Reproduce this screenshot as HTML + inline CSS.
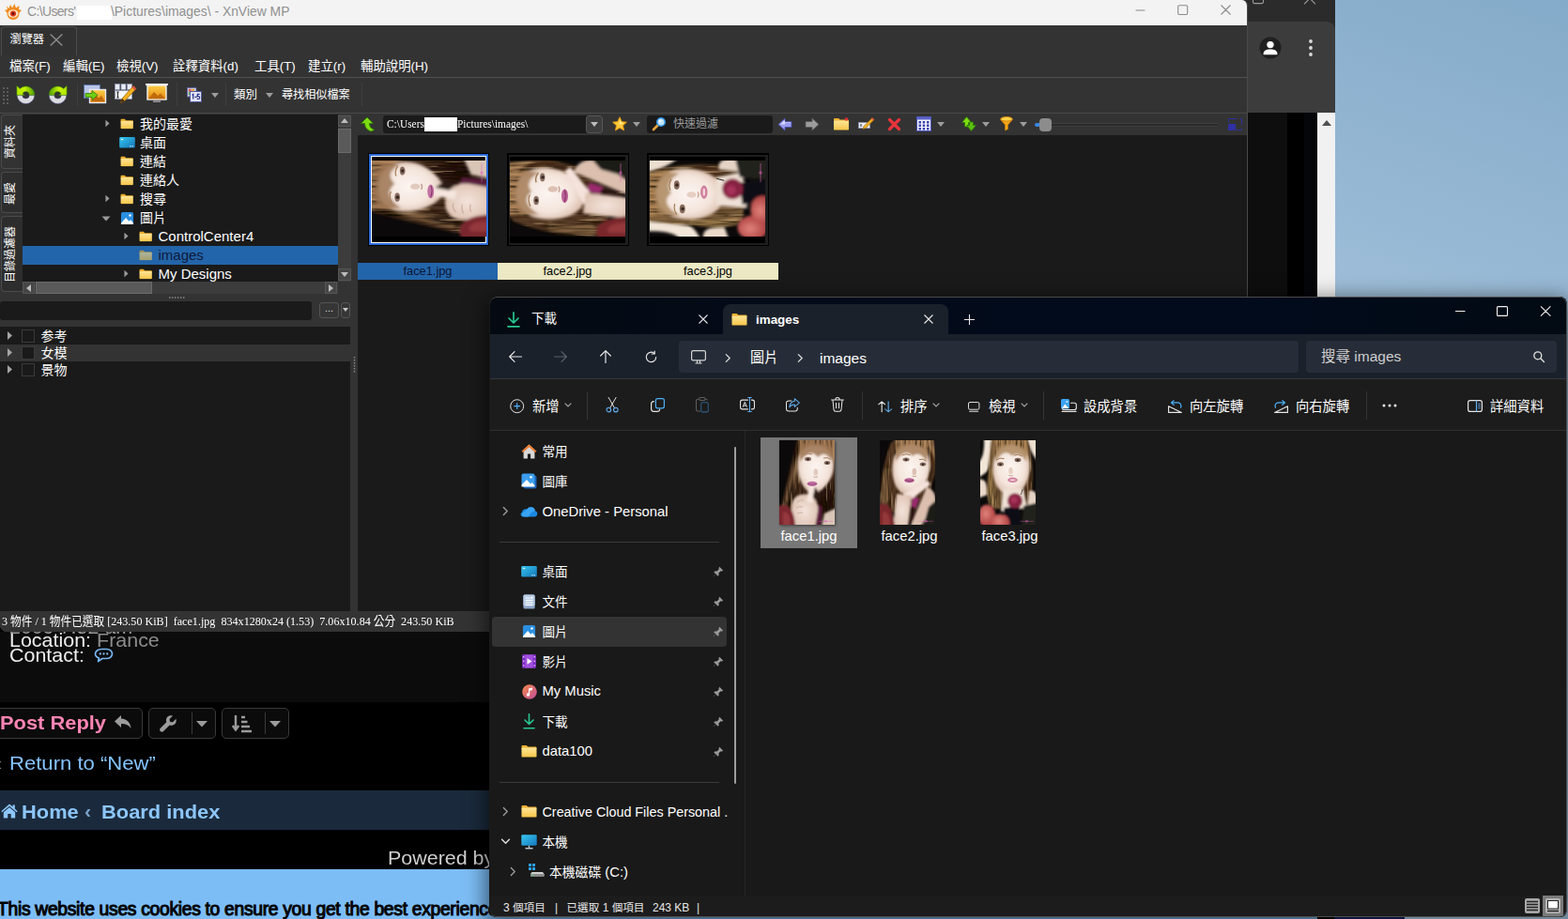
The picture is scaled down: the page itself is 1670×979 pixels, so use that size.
<!DOCTYPE html>
<html lang="zh-Hant">
<head>
<meta charset="utf-8">
<title>XnView MP + File Explorer</title>
<style>
*{box-sizing:border-box;margin:0;padding:0}
html,body{width:1670px;height:979px;overflow:hidden}
body{position:relative;font-family:"Liberation Sans","Noto Sans CJK TC",sans-serif;font-size:14px;color:#fff;
 background:linear-gradient(180deg,#87aecb 0%,#93b6d2 45%,#a1c0d9 100%)}
.a{position:absolute}
.t{position:absolute;white-space:pre;line-height:1}
svg{display:block}
.cj{font-family:"Liberation Sans","Noto Sans CJK TC",sans-serif}
.i{position:absolute;overflow:visible}
/* ---------- XnView ---------- */
#xn{left:0;top:0;width:1329px;height:673px;background:#333;border-right:1px solid #4a4a4a;overflow:hidden;border-radius:0 6px 0 7px}
#xn .title{left:0;top:0;width:1328px;height:27px;background:#f3f3f3;color:#909090;font-size:13.9px}
#xn .hl{left:0;width:1328px;height:1px;background:#515151}
#xn .menu{top:63.800px;font-size:13.300px;color:#fff}
#xn .dark{background:#1a1a1a}
#xn .sep{width:1px;background:#3e3e3e}
#xn .vtab{left:1px;width:23px;border:1px solid #4b4b4b;border-right:none;border-radius:4px 0 0 4px}
#xn .vtxt{transform-origin:0 0;transform:rotate(-90deg);font-size:12px;color:#fff}
#xn .row{left:24px;width:336px;height:20px;font-size:15px;color:#fff}
#xn .sb{background:#3c3c3c}
#xn .sbb{background:#464646;border:1px solid #555}
#xn .sbt{background:#5a5a5a;border:1px solid #6a6a6a}
#xn .cat{left:0;width:373px;height:18px}
#xn .cb{left:23px;width:14px;height:14px;border:1px solid #3a3a3a;background:#1a1a1a}
#xn .lab{top:280px;height:18px;font-size:12.8px;text-align:center;line-height:18px;color:#000;background:#ece9c4}
#xn .stat{left:2px;top:654.700px;font-family:"Liberation Serif","Noto Sans CJK TC",serif;font-size:13.300px;transform-origin:0 50%;transform:scaleX(.91);color:#fff}
/* ---------- web page ---------- */
#web{left:0;top:663px;width:1422px;height:316px;background:#000;overflow:hidden}
#web .vd{transform-origin:0 50%;transform:scaleX(1.052);font-size:20.400px}
#web .btn{top:91px;height:33px;border:1px solid #3a3a3a;border-radius:5px;background:#0b0b0b}
/* ---------- Explorer ---------- */
#ex{left:521px;top:316px;width:1148px;border-left:1px solid transparent;height:661px;background:#191919;border-radius:8px;overflow:hidden;
 box-shadow:0 6px 22px 4px rgba(0,0,0,.55)}
#ex::after{content:"";position:absolute;left:-1px;top:0;right:0;bottom:0;border:1px solid rgba(86,86,86,.85);border-radius:8px}
#ex .tx{font-size:14.8px;color:#fff}
#ex .cmd{font-size:14px;color:#fff;top:110px}
#ex .st{top:644.500px;font-size:12px;color:#e8e8e8}
#ex .vsep{width:1px;background:#353535}
</style>
</head>
<body>
<svg width="0" height="0" style="position:absolute">
<defs>
<filter id="bl1" x="-20%" y="-20%" width="140%" height="140%"><feGaussianBlur stdDeviation="1.25"/></filter>
<filter id="bl2" x="-20%" y="-20%" width="140%" height="140%"><feGaussianBlur stdDeviation="0.55"/></filter>
<clipPath id="pc"><rect width="59" height="90"/></clipPath>
<linearGradient id="fold" x1="0" y1="0" x2="0" y2="1"><stop offset="0" stop-color="#ffe596"/><stop offset="1" stop-color="#f7c548"/></linearGradient>
<linearGradient id="og" x1="0" y1="0" x2="0" y2="1"><stop offset="0" stop-color="#fbd048"/><stop offset="1" stop-color="#e8860e"/></linearGradient>
<!-- yellow folder icon 16x14 -->
<symbol id="folder" viewBox="0 0 16 14"><path d="M0 2.2C0 1.5.5 1 1.2 1h4l1.6 1.6h8c.7 0 1.2.5 1.2 1.2V5H0z" fill="#eeb030"/><rect x="0" y="3.6" width="16" height="10" rx="1.2" fill="url(#fold)"/></symbol>
<!-- pictures icon -->
<symbol id="pic" viewBox="0 0 16 16"><rect x="1" y="1" width="14" height="14" rx="2" fill="#2a8fe0"/><path d="M1 13.5 6.5 7.5l3.5 4 1.8-1.8L15 13.5V15H1z" fill="#fff"/><circle cx="11.2" cy="4.8" r="1.3" fill="#fff"/></symbol>
<!-- desktop icon -->
<symbol id="desk" viewBox="0 0 18 13"><defs><linearGradient id="dg" x1="0" y1="0" x2="1" y2="1"><stop offset="0" stop-color="#35c6ee"/><stop offset="1" stop-color="#1374b8"/></linearGradient></defs><rect x="0" y="0" width="18" height="12.5" rx="1.5" fill="url(#dg)"/><rect x="1.8" y="2" width="2.6" height="1.4" fill="#d9f4ff"/><rect x="12" y="10" width="1.5" height="1.2" fill="#d9f4ff"/><rect x="14.5" y="10" width="1.5" height="1.2" fill="#d9f4ff"/></symbol>
<!-- pin -->
<symbol id="pin" viewBox="0 0 12 12"><path d="M7.2.8 11.2 4.8 10 5.4 8.3 5.5 6.4 7.6 6.6 9.7 5.6 10.7 3.5 8.6.9 11.3.7 11.1 3.4 8.5 1.3 6.4 2.3 5.4 4.4 5.6 6.5 3.7 6.6 2z" fill="#9a9a9a"/></symbol>
<symbol id="chevw" viewBox="0 0 8 12"><path d="M1.500 1.500 6 6 1.500 10.500" fill="none" stroke="#dedede" stroke-width="1.400" stroke-linecap="round" stroke-linejoin="round"/></symbol>
<!-- chevron right -->
<symbol id="chev" viewBox="0 0 8 12"><path d="M1.5 1.5 6 6 1.5 10.5" fill="none" stroke="#9c9c9c" stroke-width="1.5" stroke-linecap="round" stroke-linejoin="round"/></symbol>
<radialGradient id="sk" cx=".5" cy=".46" r=".6"><stop offset="0" stop-color="#fcf5f1"/><stop offset=".6" stop-color="#f4e5dc"/><stop offset="1" stop-color="#d6b6a2"/></radialGradient>
<radialGradient id="sk2" cx=".5" cy=".5" r=".6"><stop offset="0" stop-color="#f4e4dc"/><stop offset="1" stop-color="#dbbfae"/></radialGradient>
<radialGradient id="kn" cx=".45" cy=".4" r=".6"><stop offset="0" stop-color="#e0837a"/><stop offset="1" stop-color="#a93a3c"/></radialGradient>
<!-- hair filter: blur + dark/light vertical streaks -->
<filter id="hf" x="-10%" y="-10%" width="120%" height="120%">
<feGaussianBlur in="SourceGraphic" stdDeviation="1.3" result="b"/>
<feTurbulence type="fractalNoise" baseFrequency=".42 .035" numOctaves="2" seed="7" result="n"/>
<feColorMatrix in="n" type="matrix" values="0 0 0 0 0 0 0 0 0 0 0 0 0 0 0 2.6 0 0 0 -1.05" result="na"/>
<feFlood flood-color="#120a06"/><feComposite in2="na" operator="in" result="dk"/>
<feColorMatrix in="n" type="matrix" values="0 0 0 0 0 0 0 0 0 0 0 0 0 0 0 0 -1.9 0 0 .72" result="nb"/>
<feFlood flood-color="#e0b888"/><feComposite in2="nb" operator="in" result="lt"/>
<feMerge result="m"><feMergeNode in="b"/><feMergeNode in="dk"/><feMergeNode in="lt"/></feMerge>
<feComposite in="m" in2="b" operator="in"/>
</filter>
<!-- photo 1 -->
<symbol id="p1" viewBox="0 0 59 90"><g clip-path="url(#pc)">
<rect width="59" height="90" fill="#0b090a"/>
<g filter="url(#hf)">
<path d="M19-3C13 22 6 48 1 73L13 81 30 72 44 93H63V-3z" fill="#4a3221"/>
<path d="M47 34C56 46 61 62 58 84L45 92H36L40 60z" fill="#2e1d15"/>
<path d="M23 2C17 22 11 42 6 64L12 66C15 46 21 24 29 6z" fill="#7c5c3c"/>
<path d="M14 40C11 50 9 60 10 70L16 66z" fill="#33221a"/>
<path d="M21-3H63V30C58 18 52 12 45 14 37 8 28 12 22 22z" fill="#a67c55"/>
</g>
<g filter="url(#bl1)">
<path d="M20 20C18 32 22 46 29 53 33 57 38 58 42 55 50 49 58 40 58 26 58 12 49 5 38 5 28 5 22 11 20 20z" fill="url(#sk)"/>
<path d="M22 5C30 1 47 1 57 9L56 22C51 13 46 13 41 18 35 11 29 13 22 23z" fill="#9c7452" opacity=".85"/>
<path d="M48 78 63 71V93H45z" fill="#d9c5b5"/>
<path d="M40 68 46 71 44 93H38z" fill="#5a1a3c"/>
<path d="M13 72C13 61 21 56 30 58 38 60 42 67 41 76L38 93H14z" fill="url(#sk2)"/>
<path d="M32 46 37.500 47 35.500 67 29 65z" fill="#f5e6de"/><path d="M38 50 44 58 40 66 36 60z" fill="#2c1c14"/>
<path d="M-3 71C7 66 16 70 17 93H-3z" fill="#7a282e"/>
<path d="M4 77C8 75 12 79 12 93H4z" fill="#95393d"/>
</g>
<g filter="url(#bl2)">
<ellipse cx="30.500" cy="20" rx="3.500" ry="2.200" fill="#8a6e62"/><ellipse cx="51" cy="24" rx="3.300" ry="2.100" fill="#8a6e62"/>
<ellipse cx="30.500" cy="20.200" rx="1.350" ry="1.300" fill="#3a2a24"/><ellipse cx="51" cy="24.200" rx="1.350" ry="1.300" fill="#3a2a24"/>
<path d="M26 15.500q4.500-2.500 9-.500M47 19q4-1.500 8 1.500" fill="none" stroke="#a8805c" stroke-width="1"/>
<ellipse cx="38.800" cy="34" rx="2.300" ry="3.800" fill="#e3cabe"/>
<path d="M36.500 38.800q2.200 1.400 4.400 0" fill="none" stroke="#c4a090" stroke-width="1"/>
<ellipse cx="35" cy="46.300" rx="5.400" ry="2.600" fill="#c272a4"/>
<path d="M30.500 46.300q4.500 1.600 9 .200" fill="none" stroke="#863a68" stroke-width=".8"/>
<path d="M19 66q3-3 7-2M18 72q3-2 7-1M19 78q3-1.500 6-.500" fill="none" stroke="#cbaea0" stroke-width=".9"/>
<rect x="42" y="85.700" width="15" height="1.300" rx=".6" fill="#d964b8" opacity=".3"/><circle cx="49.500" cy="86.300" r="1.300" fill="#e860c0" opacity=".5"/>
</g></g></symbol>
<!-- photo 2 -->
<symbol id="p2" viewBox="0 0 59 90"><g clip-path="url(#pc)">
<rect width="59" height="90" fill="#0b0909"/>
<g filter="url(#hf)">
<path d="M11 3C3 24-2 50 0 71L22 81 50 70 61 30 58-3H17z" fill="#563b27"/>
<path d="M5 30C2 44 1 58 3 68L10 64C8 52 9 40 12 30z" fill="#806040"/>
<path d="M17-3H57L59 24C51 12 42 10 36 12 28 8 22 14 17 24z" fill="#b0865c"/>
<path d="M50 6C58 12 61 24 58 38L52 30z" fill="#4e321c"/>
<path d="M31 57C41 61 48 71 45 90L28 88z" fill="#36221a"/>
</g>
<g filter="url(#bl1)">
<path d="M14 23C12 36 15 49 22 55 28 60 37 59 42 53 51 44 55 32 53 21 51 8 41 4 32 5 22 6 15 13 14 23z" fill="url(#sk)"/>
<path d="M17 8C25 2 42 2 51 11L50 23C45 14 39 13 35 17 29 10 23 13 17 23z" fill="#a47c58" opacity=".85"/>
<path d="M35 60 42 62 38.500 73 33 70z" fill="#9a2c6e"/>
<path d="M21 60 51 43 54 47 37 60.500 28 66z" fill="#f5e3dc"/>
<path d="M43 45 48 36.500 51.500 38 47 47z" fill="#f2dfd7"/>
<path d="M18 57 34 59 30 93H14z" fill="url(#sk2)"/>
<path d="M50 50C58 52 62 62 58 69L43 93H32z" fill="#dcbfae"/>
<path d="M-3 70C6 64 14 68 16 93H-3z" fill="#78282a"/>
<path d="M3 77C7 74 11 79 11 93H3z" fill="#94383a"/>
<path d="M52 71 62 62V93H46z" fill="#1b1c15"/>
</g>
<g filter="url(#bl2)">
<ellipse cx="28" cy="20.500" rx="3.500" ry="2.100" fill="#8c7266"/><ellipse cx="46" cy="25.500" rx="3.300" ry="2" fill="#8c7266"/>
<ellipse cx="28" cy="20.700" rx="1.350" ry="1.300" fill="#3a2a24"/><ellipse cx="46" cy="25.700" rx="1.350" ry="1.300" fill="#3a2a24"/>
<path d="M23.500 16q4.500-2.300 9-.300M42 20.500q4-1.300 7.500 1.700" fill="none" stroke="#a27c58" stroke-width="1"/>
<ellipse cx="36.800" cy="33.500" rx="2.300" ry="3.800" fill="#dcc0b2"/>
<path d="M34.500 38q2.200 1.400 4.400 0" fill="none" stroke="#c09c8c" stroke-width="1"/>
<ellipse cx="31.500" cy="42.800" rx="5.300" ry="2.500" fill="#ba6197"/>
<path d="M27 42.600q4.500 1.500 9 .200" fill="none" stroke="#803462" stroke-width=".8"/>
<rect x="42" y="85.700" width="15" height="1.300" rx=".6" fill="#d964b8" opacity=".3"/><circle cx="49.500" cy="86.300" r="1.300" fill="#e860c0" opacity=".5"/>
</g></g></symbol>
<!-- photo 3 -->
<symbol id="p3" viewBox="0 0 59 90"><g clip-path="url(#pc)">
<rect width="59" height="90" fill="#0b0909"/>
<g filter="url(#bl1)">
<path d="M4-3H14L12 26C8 34 2 38-3 40V24C2 22 5 12 4-3z" fill="#f2e6d8"/>
<path d="M47-3H63V25C57 18 52 8 47-3z" fill="#ecdfd0"/>
<path d="M-3 42C4 40 8 44 8 58L-3 62z" fill="#ebdaca"/>
</g>
<g filter="url(#hf)">
<path d="M12-3H50C56 12 58 40 55 65L40 75 10 73C6 50 8 20 12-3z" fill="#775a39"/>
<path d="M9 30C6 44 6 58 9 70L15 68C12 56 12 44 15 32z" fill="#98784a"/>
<path d="M14-3H49L53 26C46 13 40 10 34 13 27 9 21 14 16 26z" fill="#b08656"/>
<path d="M46 20C55 30 58 50 54 67L44 60z" fill="#553924"/>
</g>
<g filter="url(#bl1)">
<path d="M14 23C12 35 15 48 22 54 28 59 38 59 43 54 51 46 54 34 52 22 50 9 41 5 32 5 22 6 15 13 14 23z" fill="url(#sk)"/>
<path d="M16 8C24 2 42 2 50 11L49 23C44 14 38 13 34 17 28 10 22 13 16 24z" fill="#a88258" opacity=".8"/>
<path d="M24 52H46L50 72 22 76z" fill="#eee0d4"/>
<path d="M52 54C58 52 62 58 60 68L50 70z" fill="#e5d4c5"/>
<path d="M25 72 42 70 44 93H26z" fill="#0b0b12"/>
<path d="M46 70 63 66V93H44z" fill="#20221a"/>
<circle cx="37" cy="64.500" r="8" fill="#872043"/>
<circle cx="36" cy="63.500" r="3.600" fill="#a7325a"/>
<ellipse cx="7" cy="80.500" rx="9.500" ry="12" fill="url(#kn)"/>
<ellipse cx="21" cy="88" rx="10.500" ry="9.500" fill="url(#kn)"/>
</g>
<g filter="url(#bl2)">
<ellipse cx="21.500" cy="25.500" rx="3.500" ry="2.200" fill="#866a5c"/><ellipse cx="40" cy="21" rx="3.500" ry="2.200" fill="#866a5c"/>
<ellipse cx="21.500" cy="25.700" rx="1.350" ry="1.300" fill="#3a2a24"/><ellipse cx="40" cy="21.200" rx="1.350" ry="1.300" fill="#3a2a24"/>
<path d="M17 21q4-2.800 8.500-1.500M36 16q4.500-1.800 8.500.800" fill="none" stroke="#a27c58" stroke-width="1"/>
<ellipse cx="32.500" cy="32.500" rx="2.300" ry="3.800" fill="#e6cfc3"/>
<path d="M30.300 37.300q2.200 1.400 4.400 0" fill="none" stroke="#c4a090" stroke-width="1"/>
<ellipse cx="34.500" cy="42.300" rx="5.200" ry="2.700" fill="#d0809f"/>
<ellipse cx="34.500" cy="42.300" rx="3" ry=".9" fill="#f2d6d8"/>
<path d="M45 52 43.500 58" stroke="#1a1a1a" stroke-width=".7"/>
<rect x="42" y="85.700" width="15" height="1.300" rx=".6" fill="#d964b8" opacity=".3"/><circle cx="49.500" cy="86.300" r="1.300" fill="#e860c0" opacity=".5"/>
</g></g></symbol>
</defs>
</svg>
<!-- desktop wallpaper region -->
<div class="a" style="left:1420px;top:0;width:250px;height:330px;background:linear-gradient(200deg,#84abc9 0%,#91b4d1 50%,#9fbed8 100%)"></div>
<!-- ===== Chrome window (behind) : right strip ===== -->
<div class="a" style="left:1310px;top:0;width:30px;height:30px;background:#2b2b2b"></div>
<div class="a" id="chr" style="left:1328px;top:0;width:94px;height:979px;background:#0e0e0e">
 <div class="a" style="left:0;top:0;width:94px;height:40px;background:#2b2b2b"></div>
 <svg class="i" style="left:0;top:0" width="94" height="8" viewBox="0 0 94 8"><rect x="6.500" y="-6" width="11" height="9.600" rx="1.500" fill="none" stroke="#9c9c9c" stroke-width="1.100"/><path d="M61 4.300 67 -1.700 73 4.300" fill="none" stroke="#9c9c9c" stroke-width="1.100"/></svg>
 <div class="a" style="left:0;top:23px;width:94px;height:97px;background:#3c3c3c;border-radius:0 9px 0 0"></div>
 <svg class="i" style="left:13px;top:39px" width="24" height="24" viewBox="0 0 24 24"><circle cx="12" cy="12" r="11.5" fill="#1f1f1f"/><circle cx="12" cy="8.6" r="3.7" fill="#fff"/><path d="M4.600 18.200c0-3.300 3.400-4.700 7.400-4.700s7.400 1.400 7.400 4.700v1H4.600z" fill="#fff"/></svg>
 <svg class="i" style="left:65px;top:41px" width="6" height="20" viewBox="0 0 6 20"><circle cx="3" cy="3" r="1.9" fill="#dcdcdc"/><circle cx="3" cy="10" r="1.9" fill="#dcdcdc"/><circle cx="3" cy="17" r="1.9" fill="#dcdcdc"/></svg>
 <div class="a" style="left:43px;top:120px;width:18px;height:859px;background:#000"></div>
 <div class="a" style="left:61px;top:120px;width:14px;height:859px;background:#05060a"></div>
 <div class="a" style="left:75px;top:120px;width:19px;height:859px;background:#f1f1f1"></div>
 <svg class="i" style="left:79.500px;top:127.500px" width="10" height="6" viewBox="0 0 10 6"><path d="M0 6 5 0l5 6z" fill="#505050"/></svg>
</div>
<!-- ===== Chrome window : forum page visible bottom-left ===== -->
<div class="a" id="web">
 <div class="a" style="left:0;top:10px;width:1403px;height:75px;background:#0c0c0c"></div>
 <div class="t vd" style="left:10px;top:-4.7px;color:#9a9a9a">2009 7:52 am</div>
 <div class="t vd" style="left:10px;top:8.5px;color:#eee">Location: <span style="color:#8c8c8c">France</span></div>
 <div class="t vd" style="left:10px;top:24.5px;color:#eee">Contact: </div>
 <svg class="i" style="left:100px;top:27px" width="21" height="16" viewBox="0 0 21 16"><path d="M8.500 1.500h5c3.300 0 6 2.200 6 5s-2.700 5-6 5H9L4.500 14.600 5.500 11C3 10.200 1.500 8.500 1.500 6.500c0-2.800 2.700-5 7-5z" fill="none" stroke="#78b7f2" stroke-width="1.700" stroke-linejoin="round"/><circle cx="6.800" cy="6.500" r="1.150" fill="#78b7f2"/><circle cx="10.500" cy="6.500" r="1.150" fill="#78b7f2"/><circle cx="14.200" cy="6.500" r="1.150" fill="#78b7f2"/></svg>
 <!-- buttons -->
 <div class="a btn" style="left:-6px;width:158px"></div>
 <div class="t vd" style="transform:scaleX(1.072);left:0;top:97.1px;color:#ff85b4;font-weight:700;font-size:20.400px">Post Reply</div>
 <svg class="i" style="left:121px;top:98px" width="20" height="18" viewBox="0 0 20 18"><path d="M8 1 1 7.500 8 14V10c5 0 8.500 1.500 10.500 5C18 9 14.500 5 8 4.500z" fill="#9b9b9b"/></svg>
 <div class="a btn" style="left:158px;width:72px"></div>
 <svg class="i" style="left:169px;top:98px" width="20" height="20" viewBox="0 0 20 20"><path d="M18.500 4.800 15 8.300l-3-.4-.4-3L15 1.500c-2.400-.8-5 0-6.300 2-.9 1.500-1 3.200-.4 4.700L1.800 14.700c-.9.900-.9 2.400 0 3.300s2.400.9 3.300 0l6.500-6.500c1.500.6 3.300.5 4.700-.4 2-1.300 2.900-3.900 2.200-6.300z" fill="#9b9b9b"/></svg>
 <div class="a" style="left:204px;top:96px;width:1px;height:23px;background:#3a3a3a"></div>
 <svg class="i" style="left:209px;top:104px" width="12" height="8" viewBox="0 0 12 8"><path d="M0 1h12L6 7.500z" fill="#9b9b9b"/></svg>
 <div class="a btn" style="left:236px;width:72px"></div>
 <svg class="i" style="left:247px;top:98px" width="22" height="20" viewBox="0 0 22 20"><path d="M4 1v14M.8 12 4 16.500 7.200 12" fill="none" stroke="#9b9b9b" stroke-width="2.400"/><path d="M10 3h4M10 8h6.500M10 13h9M10 18h11" stroke="#9b9b9b" stroke-width="2.400"/></svg>
 <div class="a" style="left:282px;top:96px;width:1px;height:23px;background:#3a3a3a"></div>
 <svg class="i" style="left:287px;top:104px" width="12" height="8" viewBox="0 0 12 8"><path d="M0 1h12L6 7.500z" fill="#9b9b9b"/></svg>
 <!-- return link -->
 <div class="t vd" style="left:-5px;top:139.8px;color:#9b9b9b">‹</div>
 <div class="t vd" style="left:10px;top:139.8px;color:#86c3ff;transform:scaleX(1.083)">Return to “New”</div>
 <!-- nav bar -->
 <div class="a" style="left:0;top:179px;width:1403px;height:42px;background:#1a2a3c"></div>
 <svg class="i" style="left:1px;top:193px" width="18" height="16" viewBox="0 0 18 16"><path d="M9 .5.300 8.200l1 1.100L9 2.700l7.700 6.600 1-1.100L14.800 5.600V1.500h-2.300v2.100zM2.800 9.300V15.500h4.500v-4.500h3.400v4.500h4.500V9.300L9 4z" fill="#8dc6fb"/></svg>
 <div class="t vd" style="transform:scaleX(1.072);left:22.500px;top:191.8px;color:#8dc6fb;font-weight:700;font-size:20.400px">Home</div>
 <div class="t vd" style="left:90px;top:190.8px;color:#7ba3c8;font-size:20.400px;font-weight:700">‹</div>
 <div class="t vd" style="transform:scaleX(1.072);left:108.400px;top:191.8px;color:#8dc6fb;font-weight:700;font-size:20.400px">Board index</div>
 <!-- powered by -->
 <div class="t vd" style="left:413px;top:240.5px;color:#cfcfcf">Powered by phpBB</div>
 <!-- cookie banner -->
 <div class="a" style="left:0;top:263px;width:1403px;height:53px;background:#7dbdf6"></div>
 <div class="t" style="left:-3px;top:295.500px;color:#000;font-size:19.300px;letter-spacing:-.300px;-webkit-text-stroke:1px #000">This website uses cookies to ensure you get the best experience on our website.</div>
</div>
<!-- ===== XnView MP window ===== -->
<div class="a" id="xn">
 <!-- title bar -->
 <div class="a title">
  <svg class="i" style="left:4px;top:3px" width="20" height="19" viewBox="0 0 20 19"><path d="M3 3.500 5.500 6 7 2l2 3.500L11.500 1 13 5.500 16.500 3 16 7l3 1-2.500 2.500c.5 4-2.500 7.500-6.500 7.500S3 14.500 3.500 10.500L1 8l3-1z" fill="#f08a1d"/><ellipse cx="10" cy="11.500" rx="5.500" ry="4.300" fill="#fbe3c2"/><circle cx="10" cy="11.500" r="3.100" fill="#d8361e"/><circle cx="10" cy="11.500" r="1.300" fill="#5a0c06"/></svg>
  <div class="t" style="left:29px;top:6px;letter-spacing:-.600px">C:\Users'</div>
  <div class="a" style="left:81.500px;top:6px;width:37px;height:15px;background:#fff"></div>
  <div class="t" style="left:118px;top:6px">\Pictures\images\ - XnView MP</div>
  <svg class="i" style="left:1208.500px;top:5.300px" width="104" height="12" viewBox="0 0 104 12"><path d="M.5 6h10M46.500.800h8q1.200 0 1.200 1.200v7.300q0 1.200-1.200 1.200h-7.600q-1.200 0-1.200-1.200V2q0-1.200 1.200-1.200zM91.500.500l10 10M101.500.500 91.500 10.500" fill="none" stroke="#8a8a8a" stroke-width="1.100"/></svg>
 </div>
 <!-- tab bar -->
 <div class="a" style="left:1px;top:28px;width:81px;height:31px;border:1px solid #4c4c4c;border-bottom:none;border-radius:4px 4px 0 0;background:#313131"></div>
 <div class="t" style="left:10.500px;top:36px;font-size:12px;color:#fff"><span class="cj" style="font-size:12.2px">瀏覽器</span></div>
 <svg class="i" style="left:53px;top:36px" width="14" height="13" viewBox="0 0 14 13"><path d="M.7.500 13.300 12.500M13.300.500.7 12.500" stroke="#8c8c8c" stroke-width="1.500"/></svg>
 <!-- menu bar -->
 <div class="t menu" style="left:10px"><span class="cj" style="font-size:13.4px">檔案</span>(F)</div>
 <div class="t menu" style="left:67px"><span class="cj" style="font-size:13.4px">編輯</span>(E)</div>
 <div class="t menu" style="left:124px"><span class="cj" style="font-size:13.4px">檢視</span>(V)</div>
 <div class="t menu" style="left:184px"><span class="cj" style="font-size:13.4px">詮釋資料</span>(d)</div>
 <div class="t menu" style="left:271px"><span class="cj" style="font-size:13.4px">工具</span>(T)</div>
 <div class="t menu" style="left:328px"><span class="cj" style="font-size:13.4px">建立</span>(r)</div>
 <div class="t menu" style="left:384px"><span class="cj" style="font-size:13.4px">輔助說明</span>(H)</div>
 <div class="a hl" style="top:82px"></div>
 <!-- main toolbar -->
 <svg class="i" style="left:3px;top:93px" width="7" height="18" viewBox="0 0 7 18"><g fill="#5c5c5c"><rect x="0" y="0" width="2" height="2"/><rect x="4" y="0" width="2" height="2"/><rect x="0" y="4" width="2" height="2"/><rect x="4" y="4" width="2" height="2"/><rect x="0" y="8" width="2" height="2"/><rect x="4" y="8" width="2" height="2"/><rect x="0" y="12" width="2" height="2"/><rect x="4" y="12" width="2" height="2"/><rect x="0" y="16" width="2" height="2"/><rect x="4" y="16" width="2" height="2"/></g></svg>
 <!-- rotate left / right -->
 <svg class="i" style="left:17px;top:88.500px" width="22" height="22" viewBox="0 0 22 22"><defs><linearGradient id="rg" x1="0" y1="0" x2="1" y2="0"><stop offset="0" stop-color="#b4e800"/><stop offset=".45" stop-color="#c4f000"/><stop offset="1" stop-color="#4e9c06"/></linearGradient></defs><path d="M1.200 12.300A9.300 9.300 0 0 0 19.800 12.300H14.300A3.800 3.800 0 0 1 6.700 12.300z" fill="#dcdce0" stroke="#4a4a98" stroke-width=".5"/><path d="M19.800 12.300A9.300 9.300 0 0 0 4.200 5.500L.900 2.400V12.300H9.300L6.900 11A3.800 3.800 0 0 1 14.300 12.300z" fill="url(#rg)" stroke="#3c8a04" stroke-width=".5"/></svg>
 <svg class="i" style="left:50px;top:88.500px" width="22" height="22" viewBox="0 0 22 22"><g transform="translate(22 0) scale(-1 1)"><path d="M1.200 12.300A9.300 9.300 0 0 0 19.800 12.300H14.300A3.800 3.800 0 0 1 6.700 12.300z" fill="#dcdce0" stroke="#4a4a98" stroke-width=".5"/><path d="M19.800 12.300A9.300 9.300 0 0 0 4.200 5.500L.900 2.400V12.300H9.300L6.900 11A3.800 3.800 0 0 1 14.300 12.300z" fill="url(#rg)" stroke="#3c8a04" stroke-width=".5"/></g></svg>
 <div class="a sep" style="left:82px;top:88px;height:25px"></div>
 <!-- convert -->
 <svg class="i" style="left:89px;top:90px" width="24" height="21" viewBox="0 0 24 21"><rect x=".5" y=".5" width="17" height="14" fill="#b9c6e8" stroke="#5a6ea8"/><rect x="6.500" y="5.500" width="17" height="14" fill="url(#og)" stroke="#e8e8f4" stroke-width="1.400"/><path d="M8 18 13 11l3 3.500 3-2.500 3.500 6z" fill="#c06a0c"/><path d="M2 9.500h7V6.500l6 5-6 5v-3H2z" fill="#6fd013" stroke="#2f7a05" stroke-width=".8"/></svg>
 <!-- batch rename (pencil) -->
 <svg class="i" style="left:122px;top:89px" width="24" height="22" viewBox="0 0 24 22"><g fill="#e9edf6" stroke="#8c94b4" stroke-width=".7"><rect x=".5" y=".5" width="5" height="6"/><rect x="7" y=".5" width="5" height="6"/><rect x="13.500" y=".5" width="5" height="6"/></g><rect x=".5" y="7.500" width="18" height="9" fill="#f7f8fc" stroke="#8c94b4" stroke-width=".7"/><path d="M3.500 9v6M2.300 9h2.400M2.300 15h2.400" stroke="#222" stroke-width="1"/><path d="M20 2.500 23 5.500 11 18.500 6.500 20.500 8 16z" fill="#f4b01e" stroke="#8a5a08" stroke-width=".7"/><path d="M20 2.500 23 5.500 21.500 7 18.500 4z" fill="#e24a4a"/><path d="M6.500 20.500 8 16l3 2.500z" fill="#4a2c10"/></svg>
 <!-- slideshow -->
 <svg class="i" style="left:155px;top:89px" width="24" height="22" viewBox="0 0 24 22"><rect x="0" y="0" width="24" height="2" fill="#eee"/><rect x="2" y="2" width="20" height="15" fill="url(#og)" stroke="#f4f4f4" stroke-width="1.400"/><path d="M3 16.300 9 9l4 4 3-2.500 5 5.800z" fill="#c06a0c"/><rect x="8" y="18.500" width="8" height="1.200" fill="#bbb"/></svg>
 <div class="a sep" style="left:188px;top:88px;height:25px"></div>
 <!-- batch convert 1-5 -->
 <svg class="i" style="left:199px;top:93px" width="16" height="16" viewBox="0 0 16 16"><rect x=".5" y=".5" width="9.500" height="9.500" fill="#c9cfe8" stroke="#5a64a8" stroke-width=".8"/><rect x="1.800" y="1.800" width="2.800" height="2.800" fill="#e05a4a"/><rect x="5.200" y="1.800" width="2.800" height="2.800" fill="#f0a030"/><rect x="1.800" y="5.200" width="2.800" height="2.800" fill="#58b848"/><rect x="3.500" y="4.500" width="12" height="11" fill="#e4e7f6" stroke="#4a54a0" stroke-width=".9"/><path d="M5.600 8.200 6.800 7.300V12.500M8.600 10.300h1.800M13.600 7.400h-2.200l-.3 2.200q2.600-.6 2.600 1.400 0 1.500-1.500 1.500-1 0-1.400-.7" fill="none" stroke="#1c2480" stroke-width="1.150"/></svg>
 <svg class="i" style="left:225px;top:99px" width="8" height="5" viewBox="0 0 8 5"><path d="M0 0h8L4 5z" fill="#9d9d9d"/></svg>
 <div class="a sep" style="left:240px;top:88px;height:25px"></div>
 <div class="t" style="left:249px;top:95px;font-size:12.500px"><span class="cj" style="font-size:12.5px">類別</span></div>
 <svg class="i" style="left:283px;top:99px" width="8" height="5" viewBox="0 0 8 5"><path d="M0 0h8L4 5z" fill="#9d9d9d"/></svg>
 <div class="t" style="left:300px;top:95px;font-size:12px"><span class="cj" style="font-size:12.1px">尋找相似檔案</span></div>
 <div class="a sep" style="left:385px;top:88px;height:25px"></div>
 <div class="a hl" style="top:120px;background:#4a4a4a"></div>
 <!-- vertical side tabs -->
 <div class="a vtab" style="top:122px;height:58px;background:#333"></div>
 <div class="a vtab" style="top:183px;height:44px;background:#2d2d2d"></div>
 <div class="a vtab" style="top:230px;height:81px;background:#2d2d2d"></div>
 <div class="t vtxt" style="left:5px;top:169px"><span class="cj" style="font-size:12px">資料夾</span></div>
 <div class="t vtxt" style="left:5px;top:218px"><span class="cj" style="font-size:12px">最愛</span></div>
 <div class="t vtxt" style="left:5px;top:301px"><span class="cj" style="font-size:12px">目錄過濾器</span></div>
 <!-- folder tree -->
 <div class="a dark" style="left:24px;top:122px;width:336px;height:178px"></div>
 <div class="a" style="left:24px;top:262px;width:336px;height:20px;background:#2365aa"></div>
 <!-- expanders -->
 <svg class="i" style="left:111.5px;top:127px" width="5" height="9" viewBox="0 0 6 10"><path d="M.5.500 5.500 5 .500 9.500z" fill="#9a9a9a"/></svg>
 <svg class="i" style="left:111.5px;top:207px" width="5" height="9" viewBox="0 0 6 10"><path d="M.5.500 5.500 5 .500 9.500z" fill="#9a9a9a"/></svg>
 <svg class="i" style="left:108px;top:230px" width="10" height="6" viewBox="0 0 10 6"><path d="M.5.500h9L5 5.500z" fill="#9a9a9a"/></svg>
 <svg class="i" style="left:131.5px;top:247px" width="5" height="9" viewBox="0 0 6 10"><path d="M.5.500 5.500 5 .500 9.500z" fill="#9a9a9a"/></svg>
 <svg class="i" style="left:131.5px;top:287px" width="5" height="9" viewBox="0 0 6 10"><path d="M.5.500 5.500 5 .500 9.500z" fill="#9a9a9a"/></svg>
 <!-- icons -->
 <svg class="i" style="left:128px;top:125.7px" width="14.400" height="11.600"><use href="#folder"/></svg>
 <svg class="i" style="left:126.500px;top:146px" width="17" height="12"><use href="#desk"/></svg>
 <svg class="i" style="left:128px;top:165.7px" width="14.400" height="11.600"><use href="#folder"/></svg>
 <svg class="i" style="left:128px;top:185.7px" width="14.400" height="11.600"><use href="#folder"/></svg>
 <svg class="i" style="left:128px;top:205.7px" width="14.400" height="11.600"><use href="#folder"/></svg>
 <svg class="i" style="left:127.500px;top:225px" width="15" height="15"><use href="#pic"/></svg>
 <svg class="i" style="left:148px;top:245.7px" width="14.400" height="11.600"><use href="#folder"/></svg>
 <svg class="i" style="left:148px;top:265.7px;opacity:.62" width="14.400" height="11.600"><use href="#folder"/></svg>
 <svg class="i" style="left:148px;top:285.7px" width="14.400" height="11.600"><use href="#folder"/></svg>
 <!-- labels -->
 <div class="t" style="left:149px;top:125px;font-size:14px"><span class="cj" style="font-size:14px">我的最愛</span></div>
 <div class="t" style="left:149px;top:145px;font-size:14px"><span class="cj" style="font-size:14px">桌面</span></div>
 <div class="t" style="left:149px;top:165px;font-size:14px"><span class="cj" style="font-size:14px">連結</span></div>
 <div class="t" style="left:149px;top:185px;font-size:14px"><span class="cj" style="font-size:14px">連絡人</span></div>
 <div class="t" style="left:149px;top:205px;font-size:14px"><span class="cj" style="font-size:14px">搜尋</span></div>
 <div class="t" style="left:149px;top:225px;font-size:14px"><span class="cj" style="font-size:14px">圖片</span></div>
 <div class="t" style="left:168.500px;top:244px;font-size:15px">ControlCenter4</div>
 <div class="t" style="left:168.500px;top:264px;font-size:15px;color:#0e1a3c">images</div>
 <div class="t" style="left:168.500px;top:284px;font-size:15px">My Designs</div>
 <!-- vertical scrollbar -->
 <div class="a sb" style="left:360px;top:122px;width:14px;height:178px"></div>
 <div class="a sbb" style="left:360px;top:123px;width:14px;height:12px"></div>
 <svg class="i" style="left:363px;top:126px" width="8" height="5" viewBox="0 0 8 5"><path d="M0 5 4 0l4 5z" fill="#bdbdbd"/></svg>
 <div class="a sbt" style="left:360px;top:137px;width:14px;height:26px"></div>
 <div class="a sbb" style="left:360px;top:286px;width:14px;height:13px"></div>
 <svg class="i" style="left:363px;top:290px" width="8" height="5" viewBox="0 0 8 5"><path d="M0 0h8L4 5z" fill="#bdbdbd"/></svg>
 <!-- horizontal scrollbar -->
 <div class="a sb" style="left:24px;top:300px;width:336px;height:13px"></div>
 <div class="a sbb" style="left:24px;top:300px;width:13px;height:13px"></div>
 <svg class="i" style="left:28px;top:302.500px" width="5" height="8" viewBox="0 0 5 8"><path d="M5 0v8L0 4z" fill="#bdbdbd"/></svg>
 <div class="a sbt" style="left:38px;top:300px;width:124px;height:13px"></div>
 <div class="a sbb" style="left:346px;top:300px;width:13px;height:13px"></div>
 <svg class="i" style="left:350px;top:302.500px" width="5" height="8" viewBox="0 0 5 8"><path d="M0 0v8l5-4z" fill="#bdbdbd"/></svg>
 <!-- grip dots -->
 <svg class="i" style="left:180px;top:316px" width="18" height="2" viewBox="0 0 18 2"><path d="M0 1h18" stroke="#8a8a8a" stroke-width="1.400" stroke-dasharray="1.500 1.500"/></svg>
 <!-- category filter row -->
 <div class="a dark" style="left:0;top:321px;width:332px;height:20px;border-radius:3px"></div>
 <div class="a" style="left:340px;top:322px;width:21px;height:17px;border:1px solid #555;border-radius:3px;background:#363636"></div>
 <div class="t" style="left:346px;top:323px;font-size:11px;color:#ddd">...</div>
 <div class="a" style="left:363px;top:322px;width:10px;height:17px;border:1px solid #555;border-radius:3px;background:#363636"></div>
 <svg class="i" style="left:365px;top:328px" width="6" height="4" viewBox="0 0 6 4"><path d="M0 0h6L3 4z" fill="#c8c8c8"/></svg>
 <!-- category list -->
 <div class="a dark" style="left:0;top:348px;width:373px;height:303px"></div>
 <div class="a" style="left:0;top:367px;width:373px;height:18px;background:#333"></div>
 <svg class="i" style="left:8px;top:353px" width="5" height="9" viewBox="0 0 5 9"><path d="M0 0 5 4.500 0 9z" fill="#a4a4a4"/></svg>
 <svg class="i" style="left:8px;top:371px" width="5" height="9" viewBox="0 0 5 9"><path d="M0 0 5 4.500 0 9z" fill="#a4a4a4"/></svg>
 <svg class="i" style="left:8px;top:389px" width="5" height="9" viewBox="0 0 5 9"><path d="M0 0 5 4.500 0 9z" fill="#a4a4a4"/></svg>
 <div class="a cb" style="top:351px"></div>
 <div class="a cb" style="top:369px"></div>
 <div class="a cb" style="top:387px"></div>
 <div class="t" style="left:43.500px;top:351px;font-size:14px"><span class="cj" style="font-size:14px">参考</span></div>
 <div class="t" style="left:43.500px;top:369px;font-size:14px"><span class="cj" style="font-size:14px">女模</span></div>
 <div class="t" style="left:43.500px;top:387px;font-size:14px"><span class="cj" style="font-size:14px">景物</span></div>
 <!-- splitter grip -->
 <svg class="i" style="left:376px;top:380px" width="3" height="18" viewBox="0 0 3 18"><path d="M1.500 0v18" stroke="#8a8a8a" stroke-width="1.400" stroke-dasharray="1.500 1.500"/></svg>
 <!-- browser toolbar -->
 <svg class="i" style="left:383px;top:124px" width="17" height="17" viewBox="0 0 17 17"><path d="M8 1 1.500 7.500h4c0 4 2 6.500 6.500 8.500 2.500-.5 3.500-2 3.500-2-3.500-1-5-3-5-6.500h4z" fill="#7edc14" stroke="#2c7a04" stroke-width=".9" stroke-linejoin="round"/></svg>
 <div class="a dark" style="left:408px;top:123px;width:234px;height:19px;border-radius:3px"></div>
 <div class="t" style="left:411.500px;top:125px;font-family:'Liberation Serif',serif;font-size:13px;transform-origin:0 50%;transform:scaleX(.877);color:#fff">C:\Users'</div>
 <div class="a" style="left:452px;top:125px;width:35px;height:15px;background:#fff"></div>
 <div class="t" style="left:486.500px;top:125px;font-family:'Liberation Serif',serif;font-size:13px;transform-origin:0 50%;transform:scaleX(.877);color:#fff">Pictures\images\</div>
 <div class="a" style="left:624px;top:123px;width:18px;height:19px;background:#3c3c3c;border:1px solid #565656;border-radius:3px"></div>
 <svg class="i" style="left:629px;top:130px" width="8" height="5" viewBox="0 0 8 5"><path d="M0 0h8L4 5z" fill="#bdbdbd"/></svg>
 <!-- star -->
 <svg class="i" style="left:652px;top:124px" width="16" height="16" viewBox="0 0 16 16"><path d="M8 .800 10.200 5.600 15.400 6.200 11.500 9.700 12.600 14.900 8 12.300 3.400 14.900 4.500 9.700.600 6.200 5.800 5.600z" fill="#ffc83c" stroke="#e8960a" stroke-width=".9" stroke-linejoin="round"/><path d="M8 3.500 9.300 6.500 12.500 6.900 8 8.500z" fill="#fff3a8"/></svg>
 <svg class="i" style="left:674px;top:130px" width="8" height="5" viewBox="0 0 8 5"><path d="M0 0h8L4 5z" fill="#9d9d9d"/></svg>
 <!-- quick filter -->
 <div class="a dark" style="left:689px;top:123px;width:134px;height:19px;border-radius:3px"></div>
 <svg class="i" style="left:694px;top:124px" width="16" height="16" viewBox="0 0 16 16"><path d="M2 14 7 9" stroke="#e8a23c" stroke-width="2.600" stroke-linecap="round"/><circle cx="10" cy="6" r="4.300" fill="#bfe6ff" stroke="#2f8fe0" stroke-width="1.600"/><circle cx="9" cy="5" r="1.400" fill="#fff"/></svg>
 <div class="t" style="left:717px;top:126px;font-size:12px;color:#9a9a9a"><span class="cj" style="font-size:12px">快速過濾</span></div>
 <!-- back / forward -->
 <svg class="i" style="left:828px;top:125px" width="16" height="15" viewBox="0 0 16 15"><path d="M8 1 1 7.500 8 14V10.500h7v-6H8z" fill="#9a9cf0" stroke="#4a4ca8" stroke-width=".9" stroke-linejoin="round"/><path d="M8 3 3 7.500H8V5.500h6V5H8z" fill="#d8d8ff"/></svg>
 <svg class="i" style="left:857px;top:125px" width="16" height="15" viewBox="0 0 16 15"><path d="M8 1 15 7.500 8 14V10.500H1v-6H8z" fill="#9c9c9c" stroke="#5a5a5a" stroke-width=".9" stroke-linejoin="round"/></svg>
 <!-- new folder -->
 <svg class="i" style="left:888px;top:125px" width="16" height="14" viewBox="0 0 16 14"><use href="#folder"/><circle cx="13.500" cy="2" r="1.800" fill="#e03030"/></svg>
 <!-- rename -->
 <svg class="i" style="left:914px;top:124px" width="18" height="16" viewBox="0 0 18 16"><rect x=".5" y="6.500" width="12" height="6" fill="#eceff8" stroke="#8c94b4" stroke-width=".8"/><path d="M3 8v3" stroke="#222"/><path d="M15 1.500 17 3.500 8 12.500 5 13.500 6 10.500z" fill="#f4b01e" stroke="#8a5a08" stroke-width=".6"/><path d="M15 1.500 17 3.500 16 4.500 14 2.500z" fill="#e24a4a"/></svg>
 <!-- delete -->
 <svg class="i" style="left:946px;top:126px" width="13" height="13" viewBox="0 0 13 13"><path d="M1.500 1.500 11.500 11.500M11.500 1.500 1.500 11.500" stroke="#e8343c" stroke-width="3.200" stroke-linecap="round"/></svg>
 <!-- view grid -->
 <svg class="i" style="left:976px;top:124px" width="16" height="16" viewBox="0 0 16 16"><rect x=".5" y=".5" width="15" height="15" fill="#f2f3fb" stroke="#4a52b8"/><rect x=".5" y=".5" width="15" height="3" fill="#5a62c8"/><g fill="#3a42b0"><rect x="2.500" y="5" width="2.500" height="2.500"/><rect x="6.700" y="5" width="2.500" height="2.500"/><rect x="11" y="5" width="2.500" height="2.500"/><rect x="2.500" y="8.500" width="2.500" height="2.500"/><rect x="6.700" y="8.500" width="2.500" height="2.500"/><rect x="11" y="8.500" width="2.500" height="2.500"/><rect x="2.500" y="12" width="2.500" height="2.500"/><rect x="6.700" y="12" width="2.500" height="2.500"/><rect x="11" y="12" width="2.500" height="2.500"/></g></svg>
 <svg class="i" style="left:998px;top:130px" width="8" height="5" viewBox="0 0 8 5"><path d="M0 0h8L4 5z" fill="#9d9d9d"/></svg>
 <!-- sort -->
 <svg class="i" style="left:1024px;top:124px" width="16" height="16" viewBox="0 0 16 16"><path d="M5.500.500 10.500 6.500H7.500V11h-4V6.500H.500z" fill="#7edc14" stroke="#2c7a04" stroke-width=".8" stroke-linejoin="round"/><path d="M10.500 15.500 5.500 9.500H8.500V6h4V9.500h3z" fill="#5cc010" stroke="#2c7a04" stroke-width=".8" stroke-linejoin="round"/></svg>
 <svg class="i" style="left:1046px;top:130px" width="8" height="5" viewBox="0 0 8 5"><path d="M0 0h8L4 5z" fill="#9d9d9d"/></svg>
 <!-- filter funnel -->
 <svg class="i" style="left:1065px;top:124px" width="14" height="16" viewBox="0 0 14 16"><ellipse cx="7" cy="3" rx="6.300" ry="2.500" fill="#ffd24a" stroke="#d88a08" stroke-width=".9"/><path d="M.900 3.800 5.500 9v6l3-1.500V9l4.600-5.200C11 5.500 3 5.500.900 3.800z" fill="#f5a818" stroke="#c87808" stroke-width=".8" stroke-linejoin="round"/></svg>
 <svg class="i" style="left:1086px;top:130px" width="8" height="5" viewBox="0 0 8 5"><path d="M0 0h8L4 5z" fill="#9d9d9d"/></svg>
 <!-- zoom slider -->
 <div class="a" style="left:1102px;top:131px;width:197px;height:4px;background:#2a2a2a;border-radius:2px;border:1px solid #3e3e3e"></div>
 <div class="a" style="left:1102px;top:131px;width:6px;height:4px;background:#3a86e0;border-radius:2px"></div>
 <div class="a" style="left:1106.500px;top:126px;width:13.500px;height:13.500px;background:#8c8c8c;border-radius:4px"></div>
 <svg class="i" style="left:1308px;top:126px" width="15" height="13" viewBox="0 0 15 13"><rect x=".5" y=".5" width="14" height="12" fill="none" stroke="#2e2ea0" stroke-dasharray="9 3"/><rect x=".5" y="6" width="7.500" height="6.500" fill="#3030a8"/></svg>
 <!-- thumbnail area -->
 <div class="a dark" style="left:381px;top:144px;width:947px;height:507px"></div>
 <!-- thumb 1 (selected) -->
 <div class="a" style="left:392px;top:163px;width:129px;height:99px;background:#000"></div>
 <div class="a" style="left:393px;top:164px;width:127px;height:97px;background:#fff;border:2px solid #2c6bd9"></div>
 <div class="a" style="left:395.800px;top:166.800px;width:121.400px;height:91.400px;background:#000"></div>
 <svg class="i" style="left:395.500px;top:171px" width="122" height="81" viewBox="0 0 90 59" preserveAspectRatio="none"><g transform="translate(0 59) rotate(-90)"><use href="#p1" width="59" height="90"/></g></svg>
 <!-- thumb 2 -->
 <div class="a" style="left:540px;top:163px;width:130px;height:99px;background:#000"></div>
 <div class="a" style="left:541.500px;top:164.500px;width:127px;height:96px;background:#1e1e1e"></div>
 <div class="a" style="left:543px;top:166.500px;width:123px;height:92px;background:#000"></div>
 <svg class="i" style="left:543px;top:171px" width="123" height="81" viewBox="0 0 90 59" preserveAspectRatio="none"><g transform="translate(0 59) rotate(-90)"><use href="#p2" width="59" height="90"/></g></svg>
 <!-- thumb 3 -->
 <div class="a" style="left:689px;top:163px;width:130px;height:99px;background:#000"></div>
 <div class="a" style="left:690.500px;top:164.500px;width:127px;height:96px;background:#1e1e1e"></div>
 <div class="a" style="left:692px;top:166.500px;width:123px;height:92px;background:#000"></div>
 <svg class="i" style="left:692px;top:171px" width="123" height="81" viewBox="0 0 90 59" preserveAspectRatio="none"><g transform="translate(0 59) rotate(-90)"><use href="#p3" width="59" height="90"/></g></svg>
 <!-- labels -->
 <div class="a lab" style="left:381px;width:149px;background:#2365aa;color:#0c1638">face1.jpg</div>
 <div class="a lab" style="left:530px;width:149px">face2.jpg</div>
 <div class="a lab" style="left:679px;width:150px">face3.jpg</div>
 <!-- status bar -->
 <div class="a" style="left:0;top:651px;width:1328px;height:22px;background:#333"></div>
 <div class="t stat">3 <span class="cj" style="font-size:12.8px">物件</span> / 1 <span class="cj" style="font-size:12.8px">物件已選取</span> [243.50 KiB]  face1.jpg  834x1280x24 (1.53)  7.06x10.84 <span class="cj" style="font-size:12.8px">公分</span>  243.50 KiB</div>
</div>
<!-- ===== Windows 11 File Explorer ===== -->
<div class="a" id="ex">
 <!-- tab strip -->
 <div class="a" style="left:0;top:0;width:1146px;height:40px;background:linear-gradient(90deg,#050a12 0%,#030b1a 35%,#010b1c 70%,#020a13 100%)"></div>
 <svg class="i" style="left:18px;top:16px" width="14" height="17" viewBox="0 0 14 17"><path d="M7 .800V11.500M2 7l5 5 5-5" fill="none" stroke="#27c78f" stroke-width="1.700" stroke-linecap="round" stroke-linejoin="round"/><path d="M1 15.800h12" stroke="#27c78f" stroke-width="1.700" stroke-linecap="round"/></svg>
 <div class="t" style="left:44px;top:17px;font-size:13.500px;color:#fff"><span class="cj" style="font-size:13.5px">下載</span></div>
 <svg class="i" style="left:222px;top:19px" width="10" height="10" viewBox="0 0 10 10"><path d="M.5.500l9 9M9.500.500l-9 9" stroke="#e0e0e0" stroke-width="1.100"/></svg>
 <div class="a" style="left:248px;top:8px;width:240px;height:33px;background:#1b212b;border-radius:8px 8px 0 0"></div>
 <svg class="i" style="left:257px;top:17px" width="17" height="14"><use href="#folder"/></svg>
 <div class="t" style="left:283px;top:18px;font-size:13.400px;font-weight:700;color:#fff">images</div>
 <svg class="i" style="left:461.500px;top:19px" width="10" height="10" viewBox="0 0 10 10"><path d="M.5.500l9 9M9.500.500l-9 9" stroke="#e8e8e8" stroke-width="1.100"/></svg>
 <svg class="i" style="left:504.500px;top:18.500px" width="11" height="11" viewBox="0 0 11 11"><path d="M5.500 0v11M0 5.500h11" stroke="#e8e8e8" stroke-width="1.100"/></svg>
 <!-- caption buttons -->
 <svg class="i" style="left:1028px;top:10px" width="102" height="11" viewBox="0 0 102 11"><path d="M0 5.500h10.500M45.500.600h9q1 0 1 1v7.800q0 1-1 1h-9q-1 0-1-1V1.600q0-1 1-1zM91 .300l10.400 10.400M101.400.300 91 10.700" fill="none" stroke="#f0f0f0" stroke-width="1.100"/></svg>
 <!-- navigation bar -->
 <div class="a" style="left:0;top:40px;width:1146px;height:47px;background:#1b212b"></div>
 <svg class="i" style="left:20px;top:58px" width="14" height="12" viewBox="0 0 14 12"><path d="M13.500 6H1M6 .700.700 6 6 11.300" fill="none" stroke="#e6e6e6" stroke-width="1.200" stroke-linecap="round" stroke-linejoin="round"/></svg>
 <svg class="i" style="left:68px;top:58px" width="14" height="12" viewBox="0 0 14 12"><path d="M.5 6H13M8 .700 13.300 6 8 11.300" fill="none" stroke="#5c626c" stroke-width="1.200" stroke-linecap="round" stroke-linejoin="round"/></svg>
 <svg class="i" style="left:116.500px;top:57px" width="12" height="14" viewBox="0 0 12 14"><path d="M6 13.500V1M.700 6 6 .700 11.300 6" fill="none" stroke="#e6e6e6" stroke-width="1.200" stroke-linecap="round" stroke-linejoin="round"/></svg>
 <svg class="i" style="left:164.500px;top:57.500px" width="13" height="13" viewBox="0 0 13 13"><path d="M11.700 6.500A5.200 5.200 0 1 1 9.900 2.500" fill="none" stroke="#e6e6e6" stroke-width="1.200" stroke-linecap="round"/><path d="M10.200 0v3h-3" fill="none" stroke="#e6e6e6" stroke-width="1.200" stroke-linecap="round" stroke-linejoin="round"/></svg>
 <div class="a" style="left:201px;top:47px;width:660px;height:34px;background:#272d38;border-radius:4px"></div>
 <svg class="i" style="left:214px;top:57px" width="16" height="15" viewBox="0 0 16 15"><rect x=".6" y=".6" width="14.800" height="10.300" rx="1.600" fill="none" stroke="#d4d4d4" stroke-width="1.200"/><path d="M4.500 14h7M6.500 11v3M9.500 11v3" stroke="#d4d4d4" stroke-width="1.200"/></svg>
 <svg class="i" style="left:250px;top:59.500px" width="7" height="11"><use href="#chevw"/></svg>
 <div class="t" style="left:277px;top:57px;font-size:15px"><span class="cj" style="font-size:15px">圖片</span></div>
 <svg class="i" style="left:327px;top:59.500px" width="7" height="11"><use href="#chevw"/></svg>
 <div class="t" style="left:351px;top:57.500px;font-size:15.500px">images</div>
 <div class="a" style="left:869px;top:47px;width:267px;height:34px;background:#272d38;border-radius:4px"></div>
 <div class="t" style="left:885px;top:56px;font-size:15.500px;color:#cfcfcf"><span class="cj" style="font-size:15.5px">搜尋</span> images</div>
 <svg class="i" style="left:1111px;top:58px" width="12" height="12" viewBox="0 0 12 12"><circle cx="4.800" cy="4.800" r="4" fill="none" stroke="#e0e0e0" stroke-width="1.300"/><path d="M7.800 7.800 11.400 11.400" stroke="#e0e0e0" stroke-width="1.400" stroke-linecap="round"/></svg>
 <div class="a" style="left:0;top:87px;width:1146px;height:1px;background:#343841"></div>
 <!-- command bar -->
 <div class="a" style="left:0;top:88px;width:1146px;height:54px;background:#1c1c1c"></div>
 <svg class="i" style="left:20.8px;top:108.9px" width="15.4" height="15.4" viewBox="0 0 17 17"><circle cx="8.500" cy="8.500" r="7.700" fill="none" stroke="#e4e4e4" stroke-width="1.100"/><path d="M8.500 4.800v7.400M4.800 8.500h7.400" stroke="#4cb0f8" stroke-width="1.300"/></svg>
 <div class="t cmd" style="left:45px"><span class="cj" style="font-size:14.3px">新增</span></div>
 <svg class="i" style="left:79px;top:113px" width="8" height="5" viewBox="0 0 8 5"><path d="M.7.700 4 4l3.300-3.300" fill="none" stroke="#a8a8a8" stroke-width="1.100"/></svg>
 <div class="a vsep" style="left:103px;top:101px;height:30px"></div>
 <!-- cut -->
 <svg class="i" style="left:123.0px;top:106.5px" width="14.2" height="16.9" viewBox="0 0 16 19"><path d="M3.500.500 11 13.500M12.500.500 5 13.500" stroke="#e4e4e4" stroke-width="1.100" stroke-linecap="round"/><circle cx="3.800" cy="15.300" r="2.600" fill="none" stroke="#60b0f4" stroke-width="1.200"/><circle cx="12.200" cy="15.300" r="2.600" fill="none" stroke="#60b0f4" stroke-width="1.200"/></svg>
 <!-- copy -->
 <svg class="i" style="left:170.500px;top:107.700px" width="15" height="15" viewBox="0 0 15 15"><rect x="5.400" y=".6" width="9" height="10.200" rx="2" fill="none" stroke="#4cb0f8" stroke-width="1.200"/><path d="M3.400 3.600q-2.800.200-2.800 2.600v5.400q0 2.800 2.800 2.800h3.600q2.400 0 2.600-2.200" fill="none" stroke="#e4e4e4" stroke-width="1.200" stroke-linecap="round"/></svg>
 <!-- paste (disabled) -->
 <svg class="i" style="left:219.1px;top:106.7px" width="13.8" height="16.4" viewBox="0 0 16 19"><path d="M4.500 2.500H2.600q-2 0-2 2v11q0 2 2 2h3M11.500 2.500h1q1.800 0 2 1.500" fill="none" stroke="#5d5d5d" stroke-width="1.200"/><rect x="4.500" y=".6" width="7" height="3.400" rx="1.200" fill="none" stroke="#5d5d5d" stroke-width="1.200"/><rect x="6.600" y="6.600" width="8.800" height="11.800" rx="1.600" fill="none" stroke="#2f5d86" stroke-width="1.200"/></svg>
 <!-- rename -->
 <svg class="i" style="left:266.2px;top:107.3px" width="16.0" height="16.0" viewBox="0 0 18 18"><path d="M10 3.500H3q-2.400 0-2.400 2.400v6.200q0 2.400 2.400 2.400h7M13.500 3.500h1.500q2.400 0 2.400 2.400v6.200q0 2.400-2.400 2.400h-1.500" fill="none" stroke="#e4e4e4" stroke-width="1.200"/><path d="M11.800.600v16.800M9.800.600h4M9.800 17.400h4" stroke="#60b0f4" stroke-width="1.200" stroke-linecap="round"/><path d="M3.600 12 6 6l2.400 6M4.400 10.200h3.200" fill="none" stroke="#e4e4e4" stroke-width="1.100" stroke-linejoin="round"/></svg>
 <!-- share -->
 <svg class="i" style="left:314.7px;top:107.8px" width="15.2" height="14.4" viewBox="0 0 18 17"><path d="M7 3.500H3.600q-3 0-3 3v7q0 3 3 3h8q3 0 3-3v-1.500" fill="none" stroke="#e4e4e4" stroke-width="1.200" stroke-linecap="round"/><path d="M11 .800 17 6l-6 5.200V8.200Q6.500 8 4.500 11.500 5 5 11 3.800z" fill="none" stroke="#60b0f4" stroke-width="1.200" stroke-linejoin="round"/></svg>
 <!-- delete -->
 <svg class="i" style="left:363.1px;top:107.2px" width="14.0" height="15.8" viewBox="0 0 16 18"><path d="M.600 3.500h14.800M5.500 3.200q0-2.600 2.500-2.600t2.500 2.600M2.300 3.800 3.400 15q.200 2.400 2.400 2.400h4.400q2.200 0 2.400-2.400L13.700 3.800M6.300 7v6.500M9.700 7v6.500" fill="none" stroke="#e4e4e4" stroke-width="1.150" stroke-linecap="round"/></svg>
 <div class="a vsep" style="left:396px;top:101px;height:30px"></div>
 <!-- sort -->
 <svg class="i" style="left:413.2px;top:110.7px" width="15.8" height="12.6" preserveAspectRatio="none" viewBox="0 0 17 17"><path d="M4.500 16V1.500M.800 5.200 4.500 1.200 8.200 5.200" fill="none" stroke="#e4e4e4" stroke-width="1.200" stroke-linecap="round" stroke-linejoin="round"/><path d="M12 1v14.500M8.200 11.800 12 15.800l3.800-4" fill="none" stroke="#60b0f4" stroke-width="1.200" stroke-linecap="round" stroke-linejoin="round"/></svg>
 <div class="t cmd" style="left:437px"><span class="cj" style="font-size:14.3px">排序</span></div>
 <svg class="i" style="left:471px;top:113px" width="8" height="5" viewBox="0 0 8 5"><path d="M.7.700 4 4l3.300-3.300" fill="none" stroke="#a8a8a8" stroke-width="1.100"/></svg>
 <!-- view -->
 <svg class="i" style="left:508.6px;top:111.8px" width="12.4" height="10.8" viewBox="0 0 15 13"><rect x=".6" y=".6" width="13.800" height="9.300" rx="1.800" fill="none" stroke="#e4e4e4" stroke-width="1.200"/><path d="M2 12.400h11" stroke="#e4e4e4" stroke-width="1.200" stroke-linecap="round"/></svg>
 <div class="t cmd" style="left:531px"><span class="cj" style="font-size:14.3px">檢視</span></div>
 <svg class="i" style="left:565px;top:113px" width="8" height="5" viewBox="0 0 8 5"><path d="M.7.700 4 4l3.300-3.300" fill="none" stroke="#a8a8a8" stroke-width="1.100"/></svg>
 <div class="a vsep" style="left:589px;top:101px;height:30px"></div>
 <!-- set as background -->
 <svg class="i" style="left:607.500px;top:109px" width="17" height="14" viewBox="0 0 17 14"><path d="M10.500 4.200H14.300q2 0 2 2v3.300q0 2-2 2H3.200q-1.900 0-1.900-1.700M1.200 13.400H16" fill="none" stroke="#e4e4e4" stroke-width="1.150" stroke-linecap="round"/><rect x="0" y="0" width="9" height="10.600" rx="1.500" fill="#3ba2f2"/><path d="M.800 10 4.300 5.600 8.300 10z" fill="#fff"/><circle cx="6.400" cy="2.900" r=".9" fill="#fff"/></svg>
 <div class="t cmd" style="left:632px"><span class="cj" style="font-size:14.3px">設成背景</span></div>
 <!-- rotate left -->
 <svg class="i" style="left:721.500px;top:110px" width="15" height="14" viewBox="0 0 15 14"><path d="M.600 6.800V13.400H14.400z" fill="none" stroke="#e4e4e4" stroke-width="1.150" stroke-linejoin="round"/><path d="M13.600 8.300C14.800 4.500 12.500 2.900 9.500 2.900H3.600M6.200.600 3.400 2.900 6.200 5.300" fill="none" stroke="#4cb0f8" stroke-width="1.200" stroke-linecap="round" stroke-linejoin="round"/></svg>
 <div class="t cmd" style="left:745px"><span class="cj" style="font-size:14.3px">向左旋轉</span></div>
 <!-- rotate right -->
 <svg class="i" style="left:834.500px;top:110px" width="15" height="14" viewBox="0 0 15 14"><g transform="translate(15 0) scale(-1 1)"><path d="M.600 6.800V13.400H14.400z" fill="none" stroke="#e4e4e4" stroke-width="1.150" stroke-linejoin="round"/><path d="M13.600 8.300C14.800 4.500 12.500 2.900 9.500 2.900H3.600M6.200.600 3.400 2.900 6.200 5.300" fill="none" stroke="#4cb0f8" stroke-width="1.200" stroke-linecap="round" stroke-linejoin="round"/></g></svg>
 <div class="t cmd" style="left:858px"><span class="cj" style="font-size:14.3px">向右旋轉</span></div>
 <div class="a vsep" style="left:933px;top:101px;height:30px"></div>
 <svg class="i" style="left:950px;top:114px" width="16" height="4" viewBox="0 0 16 4"><circle cx="2" cy="2" r="1.500" fill="#e4e4e4"/><circle cx="8" cy="2" r="1.500" fill="#e4e4e4"/><circle cx="14" cy="2" r="1.500" fill="#e4e4e4"/></svg>
 <!-- details pane -->
 <svg class="i" style="left:1041px;top:110px" width="16" height="13" viewBox="0 0 16 13"><rect x=".6" y=".6" width="14.800" height="11.800" rx="2.200" fill="none" stroke="#e4e4e4" stroke-width="1.200"/><path d="M9.500.600v11.800" stroke="#60b0f4" stroke-width="1.200"/><path d="M11.300 4.300h2.400M11.300 6.500h2.400M11.300 8.700h2.400" stroke="#60b0f4" stroke-width="1"/></svg>
 <div class="t cmd" style="left:1065px"><span class="cj" style="font-size:14.3px">詳細資料</span></div>
 <div class="a" style="left:0;top:142px;width:1146px;height:1px;background:#303030"></div>
 <!-- sidebar -->
 <div class="a" style="left:2px;top:341px;width:250px;height:32px;background:#333;border-radius:4px"></div>
 <div class="a" style="left:10px;top:261px;width:234px;height:1px;background:#3a3a3a"></div>
 <div class="a" style="left:10px;top:517px;width:234px;height:1px;background:#3a3a3a"></div>
 <div class="a" style="left:260px;top:160px;width:2px;height:359px;background:#9c9c9c;border-radius:1px"></div>
 <div class="a" style="left:271px;top:143px;width:1px;height:495px;background:#262626"></div>
 <!-- home -->
 <svg class="i" style="left:33px;top:157px" width="17" height="16" viewBox="0 0 17 16"><path d="M8.500.600.600 7.800h2V15.400h4.300v-5h3.200v5h4.300V7.800h2z" fill="#d8d8d8"/><path d="M8.500.600.600 7.800 2 9 8.500 3.200 15 9l1.400-1.200z" fill="#f07a28"/></svg>
 <div class="t tx" style="left:55.500px;top:158px"><span class="cj" style="font-size:13.6px">常用</span></div>
 <!-- gallery -->
 <svg class="i" style="left:33px;top:188px" width="17" height="17" viewBox="0 0 17 17"><rect x="2.500" y="2.500" width="14" height="14" rx="2" fill="#1b62b4"/><rect x=".5" y=".5" width="14" height="14" rx="2" fill="#3c9df0"/><path d="M.5 12.500 6 7l4 4.500 1.500-1.500 3 3v1.500H.5z" fill="#fff"/><circle cx="10.500" cy="4.300" r="1.200" fill="#fff"/></svg>
 <div class="t tx" style="left:55.500px;top:190px"><span class="cj" style="font-size:13.6px">圖庫</span></div>
 <!-- onedrive -->
 <svg class="i" style="left:13px;top:223px" width="7" height="11"><use href="#chev"/></svg>
 <svg class="i" style="left:32px;top:223px" width="19" height="12" viewBox="0 0 19 12"><path d="M4.500 11.500h10.800a3.200 3.200 0 0 0 .6-6.300A4.600 4.600 0 0 0 7.300 3.600 3.800 3.800 0 0 0 2 6.800a2.500 2.500 0 0 0 .5 4.700z" fill="#1a8ae2"/><path d="M7.300 3.600a4.600 4.600 0 0 1 8.600 1.600c-2 0-5 2-7 6.300H4.500a2.500 2.500 0 0 1-2.400-3.300c1-1.500 3-2 5.200-4.600z" fill="#3aa4f4"/></svg>
 <div class="t tx" style="left:55.500px;top:222px">OneDrive - Personal</div>
 <!-- desktop -->
 <svg class="i" style="left:33px;top:287px" width="17" height="12"><use href="#desk"/></svg>
 <div class="t tx" style="left:55.500px;top:286px"><span class="cj" style="font-size:13.6px">桌面</span></div>
 <!-- documents -->
 <svg class="i" style="left:35px;top:317px" width="13" height="16" viewBox="0 0 13 16"><rect x=".4" y=".4" width="12.200" height="15.200" rx="1.500" fill="#8ea6c8"/><rect x=".4" y=".4" width="12.200" height="12" rx="1.500" fill="#b8cbe4"/><path d="M2.600 4h5M2.600 6.500h7.800M2.600 9h7.800M2.600 11.500h7.800" stroke="#fff" stroke-width="1.100"/><rect x="8.400" y="2.800" width="2" height="2" fill="#fff"/></svg>
 <div class="t tx" style="left:55.500px;top:318px"><span class="cj" style="font-size:13.6px">文件</span></div>
 <!-- pictures -->
 <svg class="i" style="left:34px;top:349px" width="15" height="15"><use href="#pic"/></svg>
 <div class="t tx" style="left:55.500px;top:350px"><span class="cj" style="font-size:13.6px">圖片</span></div>
 <!-- videos -->
 <svg class="i" style="left:34px;top:381px" width="15" height="15" viewBox="0 0 15 15"><rect x=".3" y=".3" width="14.400" height="14.400" rx="2" fill="#a24fe0"/><rect x=".3" y=".3" width="3" height="14.400" fill="#7a2cc0"/><rect x="11.700" y=".3" width="3" height="14.400" fill="#7a2cc0"/><path d="M5.500 4.300v6.400l5-3.200z" fill="#fff"/><g fill="#d8b4f8"><rect x="1" y="2" width="1.400" height="1.600"/><rect x="1" y="6.600" width="1.400" height="1.600"/><rect x="1" y="11.200" width="1.400" height="1.600"/><rect x="12.600" y="2" width="1.400" height="1.600"/><rect x="12.600" y="6.600" width="1.400" height="1.600"/><rect x="12.600" y="11.200" width="1.400" height="1.600"/></g></svg>
 <div class="t tx" style="left:55.500px;top:382px"><span class="cj" style="font-size:13.6px">影片</span></div>
 <!-- music -->
 <svg class="i" style="left:33.500px;top:412.500px" width="16" height="16" viewBox="0 0 16 16"><defs><linearGradient id="mg" x1="0" y1="0" x2="1" y2="1"><stop offset="0" stop-color="#f08a48"/><stop offset="1" stop-color="#c44c9c"/></linearGradient></defs><circle cx="8" cy="8" r="7.800" fill="url(#mg)"/><path d="M7 11V4.500l4-1V6L8.200 6.700V11a1.700 1.700 0 1 1-1.200-1.600z" fill="#fff"/></svg>
 <div class="t tx" style="left:55.500px;top:413px">My Music</div>
 <!-- downloads -->
 <svg class="i" style="left:35px;top:444px" width="13" height="17" viewBox="0 0 13 17"><path d="M6.500.800V11M2 7l4.500 4.500L11 7" fill="none" stroke="#27c78f" stroke-width="1.600" stroke-linecap="round" stroke-linejoin="round"/><path d="M1 15.800h11" stroke="#27c78f" stroke-width="1.600" stroke-linecap="round"/></svg>
 <div class="t tx" style="left:55.500px;top:446px"><span class="cj" style="font-size:13.6px">下載</span></div>
 <!-- data100 -->
 <svg class="i" style="left:33px;top:477px" width="17" height="14"><use href="#folder"/></svg>
 <div class="t tx" style="left:55.500px;top:477px">data100</div>
 <!-- pins -->
 <svg class="i" style="left:237px;top:287px" width="12" height="12"><use href="#pin"/></svg>
 <svg class="i" style="left:237px;top:319px" width="12" height="12"><use href="#pin"/></svg>
 <svg class="i" style="left:237px;top:351px" width="12" height="12"><use href="#pin"/></svg>
 <svg class="i" style="left:237px;top:383px" width="12" height="12"><use href="#pin"/></svg>
 <svg class="i" style="left:237px;top:415px" width="12" height="12"><use href="#pin"/></svg>
 <svg class="i" style="left:237px;top:447px" width="12" height="12"><use href="#pin"/></svg>
 <svg class="i" style="left:237px;top:479px" width="12" height="12"><use href="#pin"/></svg>
 <!-- creative cloud -->
 <svg class="i" style="left:13px;top:543px" width="7" height="11"><use href="#chev"/></svg>
 <svg class="i" style="left:33px;top:541px" width="17" height="14"><use href="#folder"/></svg>
 <div class="t tx" style="left:55.500px;top:541.500px;width:199px;overflow:hidden;font-size:14.350px">Creative Cloud Files Personal .</div>
 <!-- this pc -->
 <svg class="i" style="left:11px;top:577px" width="11" height="7" viewBox="0 0 12 8"><path d="M1.500 1.500 6 6 10.500 1.500" fill="none" stroke="#e2e2e2" stroke-width="1.600" stroke-linecap="round" stroke-linejoin="round"/></svg>
 <svg class="i" style="left:33px;top:573px" width="17" height="16" viewBox="0 0 17 16"><defs><linearGradient id="pg" x1="0" y1="0" x2="1" y2="1"><stop offset="0" stop-color="#38c8f0"/><stop offset="1" stop-color="#1478c0"/></linearGradient></defs><rect x=".3" y=".3" width="16.400" height="11.400" rx="1.300" fill="url(#pg)"/><path d="M8.500 11.700v2.500M4.500 14.800h8" stroke="#b8c4cc" stroke-width="1.400"/></svg>
 <div class="t tx" style="left:55.500px;top:574px"><span class="cj" style="font-size:13.6px">本機</span></div>
 <!-- local disk C -->
 <svg class="i" style="left:21px;top:607px" width="7" height="11"><use href="#chev"/></svg>
 <svg class="i" style="left:41px;top:604px" width="17" height="14" viewBox="0 0 17 14"><g fill="#2aa0f0"><rect x="0" y="0" width="3" height="3"/><rect x="4" y="0" width="3" height="3"/><rect x="0" y="4" width="3" height="3"/><rect x="4" y="4" width="3" height="3"/></g><path d="M3.500 9h11.500l1.500 2v2.500H2V11z" fill="#d0d0d0"/><rect x="2" y="11" width="14.500" height="2.500" fill="#8a8a8a"/><rect x="3.500" y="11.800" width="2" height="1" fill="#4ae06a"/></svg>
 <div class="t tx" style="left:63px;top:606px"><span class="cj" style="font-size:13.8px">本機磁碟</span> (C:)</div>
 <!-- content: tiles -->
 <div class="a" style="left:288px;top:150px;width:103px;height:118px;background:#777"></div>
 <svg class="i" style="left:308px;top:153px;filter:drop-shadow(1px 1px 1.500px rgba(0,0,0,.5))" width="59" height="90"><use href="#p1"/></svg>
 <svg class="i" style="left:415px;top:153px" width="59" height="90"><use href="#p2"/></svg>
 <svg class="i" style="left:522px;top:153px" width="59" height="90"><use href="#p3"/></svg>
 <div class="t tx" style="left:288px;top:248px;width:103px;text-align:center">face1.jpg</div>
 <div class="t tx" style="left:395px;top:248px;width:103px;text-align:center">face2.jpg</div>
 <div class="t tx" style="left:502px;top:248px;width:103px;text-align:center">face3.jpg</div>
 <!-- status bar -->
 <div class="a" style="left:0;top:638px;width:1146px;height:23px;background:#1c1c1c"></div>
 <div class="t st" style="left:14px">3 <span class="cj" style="font-size:11.6px">個項目</span></div>
 <div class="t st" style="left:69px">|</div>
 <div class="t st" style="left:81.500px"><span class="cj" style="font-size:11.6px">已選取</span> 1 <span class="cj" style="font-size:11.6px">個項目</span></div>
 <div class="t st" style="left:173px">243 KB</div>
 <div class="t st" style="left:220px">|</div>
 <svg class="i" style="left:1102px;top:641px" width="16" height="16" viewBox="0 0 16 16"><rect x="0" y="0" width="16" height="16" rx="2" fill="#a8a8a8"/><path d="M2 3.500h12M2 6.500h12M2 9.500h12M2 12.500h12" stroke="#222" stroke-width="1.300"/></svg>
 <div class="a" style="left:1121px;top:638px;width:22px;height:22px;background:#7a7a7a"></div>
 <svg class="i" style="left:1124px;top:641px" width="16" height="16" viewBox="0 0 16 16"><rect x="0" y="0" width="16" height="16" rx="2" fill="#b4b4b4"/><rect x="2.500" y="2.500" width="11" height="8.500" fill="#fff" stroke="#222" stroke-width="1"/><path d="M2 13.500h12" stroke="#222" stroke-width="1.300"/></svg>
</div>
<!-- bottom desktop/taskbar sliver -->
<div class="a" style="left:1421px;top:977px;width:75px;height:2px;background:#0c1440"></div>
<div class="a" style="left:1496px;top:977px;width:174px;height:2px;background:#70889c"></div>
</body>
</html>
